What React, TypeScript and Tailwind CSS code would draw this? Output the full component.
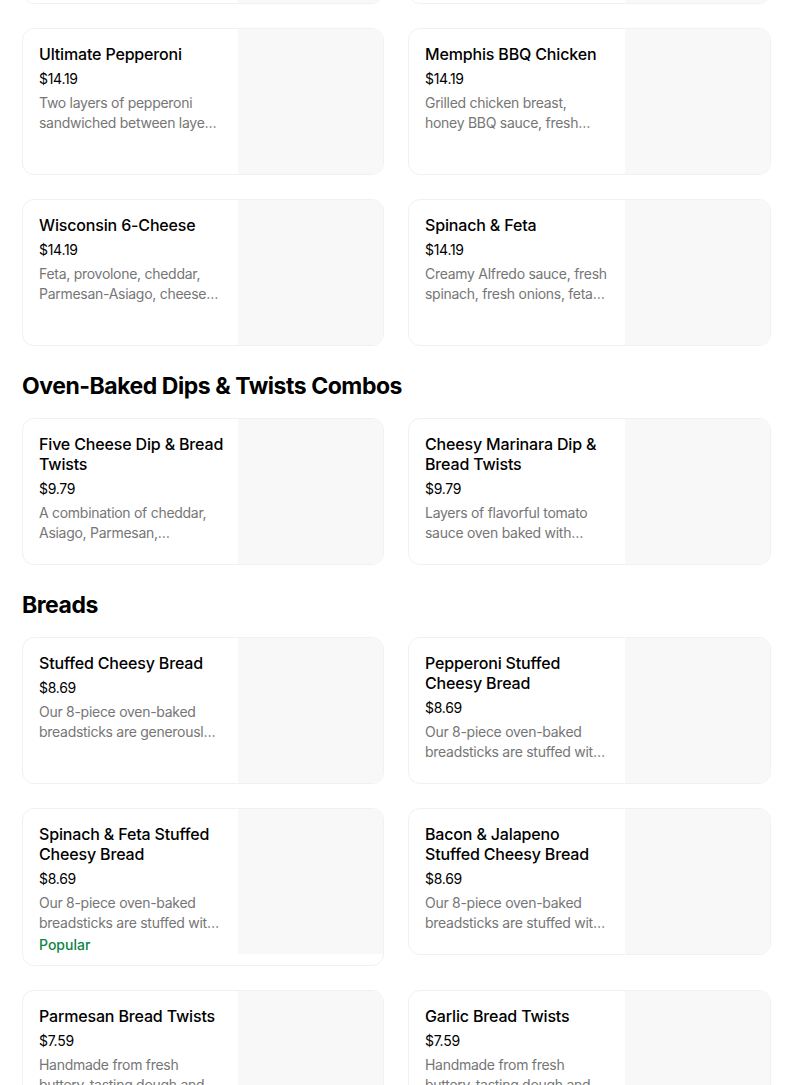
import React from "react"

type Item = {
  name: string
  price: string
  desc: string
  popular?: boolean
}

const topRow: Item[] = [
  { name: "Deluxe", price: "$14.19", desc: "Pepperoni, Italian sausage, fresh green peppers, fresh mushrooms and fresh onions." },
  { name: "Philly Cheese Steak", price: "$14.19", desc: "Tender slices of steak, fresh onions, fresh green peppers and fresh mushrooms." },
]

const pizzas: Item[] = [
  { name: "Ultimate Pepperoni", price: "$14.19", desc: "Two layers of pepperoni sandwiched between layers of provolone and mozzarella." },
  { name: "Memphis BBQ Chicken", price: "$14.19", desc: "Grilled chicken breast, honey BBQ sauce, fresh onions, provolone and cheddar." },
  { name: "Wisconsin 6-Cheese", price: "$14.19", desc: "Feta, provolone, cheddar, Parmesan-Asiago, cheese made with 100% real mozzarella." },
  { name: "Spinach & Feta", price: "$14.19", desc: "Creamy Alfredo sauce, fresh spinach, fresh onions, feta, Parmesan-Asiago and provolone." },
]

const combos: Item[] = [
  { name: "Five Cheese Dip & Bread Twists", price: "$9.79", desc: "A combination of cheddar, Asiago, Parmesan, provolone, and mozzarella cheese." },
  { name: "Cheesy Marinara Dip & Bread Twists", price: "$9.79", desc: "Layers of flavorful tomato sauce oven baked with mozzarella cheese." },
]

const breads: Item[] = [
  { name: "Stuffed Cheesy Bread", price: "$8.69", desc: "Our 8-piece oven-baked breadsticks are generously stuffed with cheese." },
  { name: "Pepperoni Stuffed Cheesy Bread", price: "$8.69", desc: "Our 8-piece oven-baked breadsticks are stuffed with pepperoni and cheese." },
  { name: "Spinach & Feta Stuffed Cheesy Bread", price: "$8.69", desc: "Our 8-piece oven-baked breadsticks are stuffed with spinach and feta.", popular: true },
  { name: "Bacon & Jalapeno Stuffed Cheesy Bread", price: "$8.69", desc: "Our 8-piece oven-baked breadsticks are stuffed with bacon and jalapeno." },
  { name: "Parmesan Bread Twists", price: "$7.59", desc: "Handmade from fresh buttery-tasting dough and baked to a golden brown." },
  { name: "Garlic Bread Twists", price: "$7.59", desc: "Handmade from fresh buttery-tasting dough and baked to a golden brown." },
]

function ItemCard({ item }: { item: Item }) {
  return (
    <div className="flex items-start rounded-xl border border-[#f1f1f1] bg-white overflow-hidden">
      <div className="flex-1 min-w-0 pt-[15px] pl-4 pr-3 pb-[10px]">
        <div className="text-[16px] leading-5 font-medium tracking-[-0.01em] text-black">{item.name}</div>
        <div className="mt-[5px] text-[14px] leading-5 tracking-[-0.02em] text-black">{item.price}</div>
        <div className="mt-1 mr-[5px] text-[14px] leading-5 tracking-[-0.02em] text-[#767676] line-clamp-2">
          {item.desc}
        </div>
        {item.popular && (
          <div className="mt-[2px] text-[14px] leading-5 font-medium text-[#0e8345]">Popular</div>
        )}
      </div>
      <div className="w-[145px] h-[145px] shrink-0 bg-[#f8f8f8]" />
    </div>
  )
}

function Grid({ items }: { items: Item[] }) {
  return (
    <div className="grid grid-cols-[362px_363px] gap-x-6 gap-y-6 items-start">
      {items.map((item) => (
        <ItemCard key={item.name} item={item} />
      ))}
    </div>
  )
}

function Heading({ children }: { children: React.ReactNode }) {
  return (
    <h2 className="mt-[24px] mb-[16px] text-[23px] leading-8 font-bold tracking-[-0.02em] text-black">
      {children}
    </h2>
  )
}

export default function App() {
  return (
    <div className="min-h-screen bg-white overflow-hidden" style={{ fontFamily: "Inter, 'Noto Sans', sans-serif" }}>
      <div className="w-[749px] ml-[22px] mt-[-143px]">
        <div className="mb-6">
          <Grid items={topRow} />
        </div>
        <Grid items={pizzas} />
        <Heading>Oven-Baked Dips &amp; Twists Combos</Heading>
        <Grid items={combos} />
        <Heading>Breads</Heading>
        <Grid items={breads} />
      </div>
    </div>
  )
}
